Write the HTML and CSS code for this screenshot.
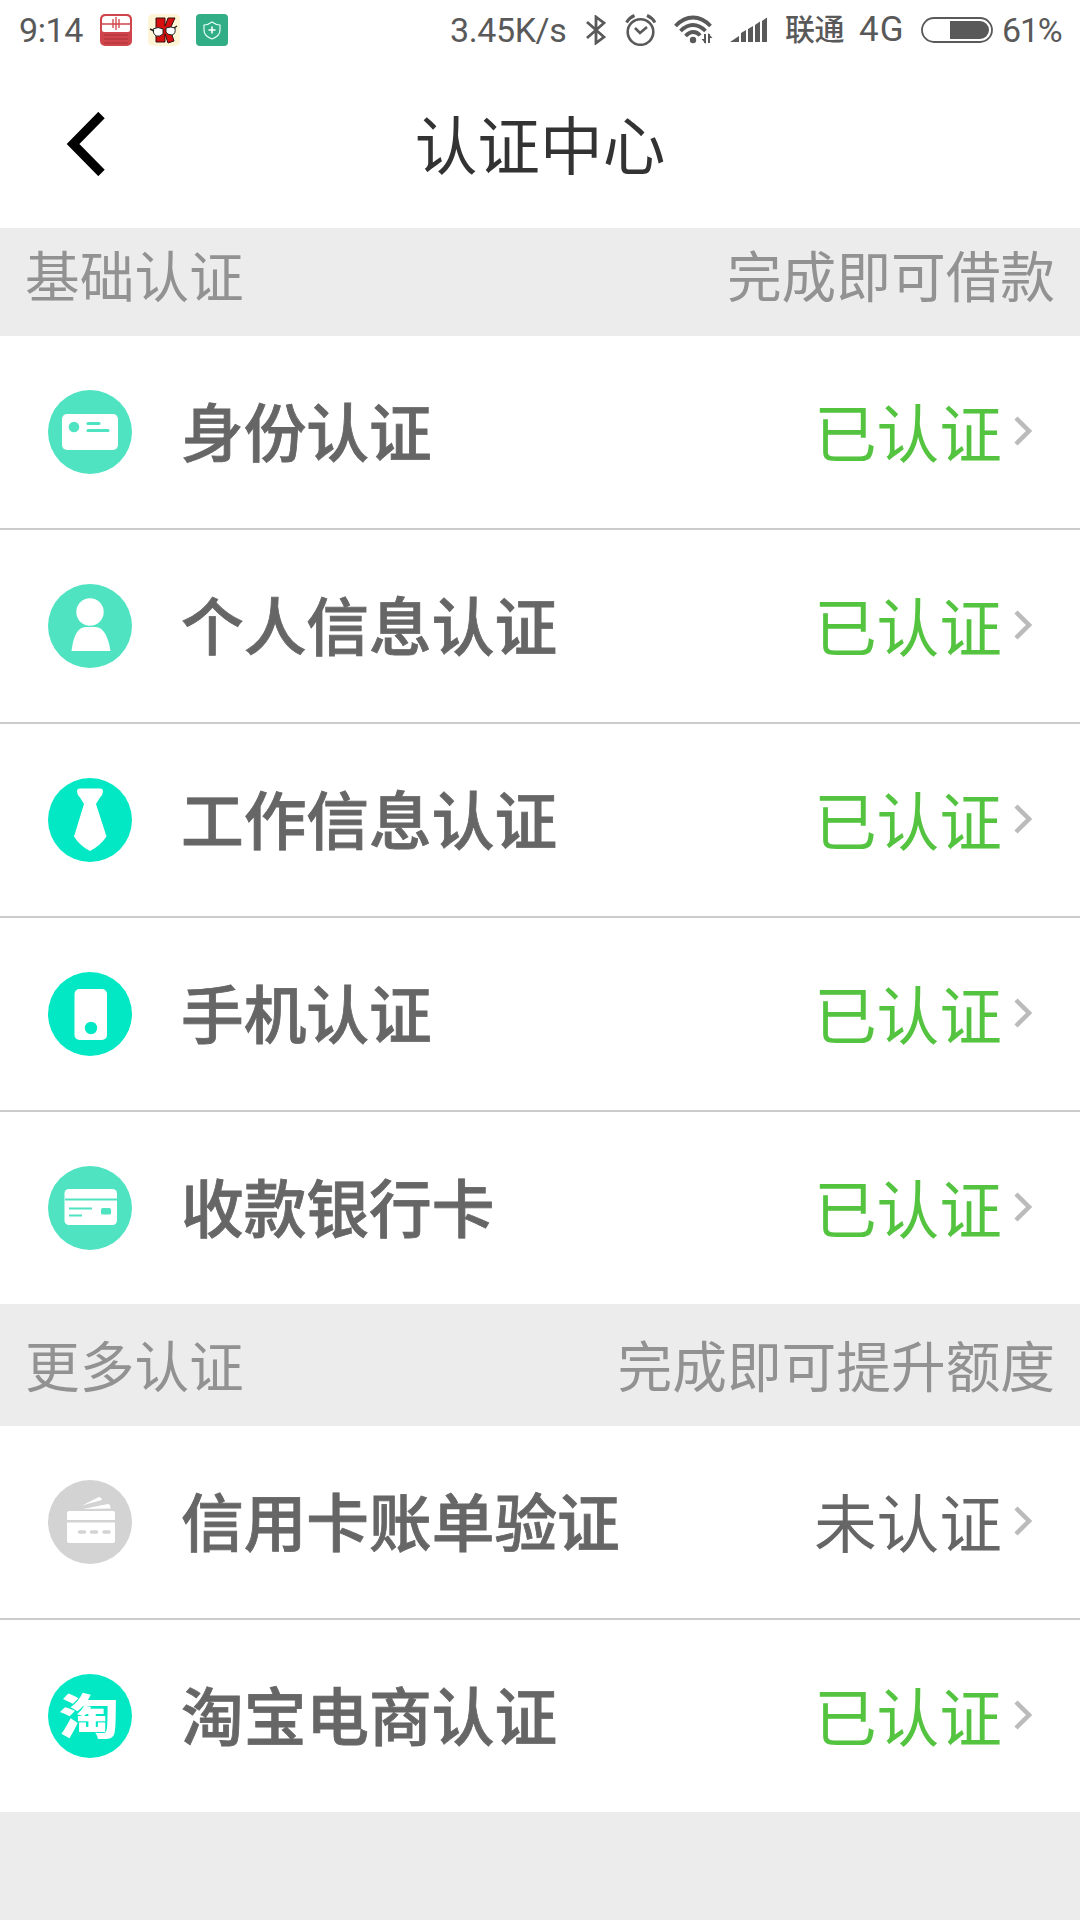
FILE: index.html
```html
<!DOCTYPE html>
<html lang="zh-CN">
<head>
    <meta charset="UTF-8">
    <title>认证中心</title>
    <link rel="stylesheet" href="styles.css">
</head>
<body>

<div class="status-bar">
    <span class="time">9:14</span>
    <svg class="app-icon" viewBox="0 0 32 32">
        <rect width="32" height="32" rx="5" fill="#d0454b"/>
        <path d="M2 16V6q0-4 4-4h20q4 0 4 4v10q0 2-2 2H4q-2 0-2-2z" fill="#fff"/>
        <path d="M2 10h28M13 5v9M16 3v13M19 5v9" stroke="#d0454b" stroke-width="1.300"/>
        <path d="M4 21h24M4 25h24M4 29h24" stroke="#a93239" stroke-width="1"/>
    </svg>
    <svg class="app-icon" viewBox="0 0 32 32">
        <rect width="32" height="32" rx="5" fill="#fdf5d6"/>
        <path d="M8 4h9v8l3-8h7l-5 11 4 12-6 2-3-9v8H8z" fill="#d5100f" stroke="#311" stroke-width="1"/>
        <path d="M5 15q5-3 10 0v5q-3 3-7 2-3-2-3-7zM18 14q5-2 9 0 1 6-3 7-5 0-6-3z" fill="#fff" stroke="#222" stroke-width="1"/>
        <path d="M2 15l4 2M26 14l3-2" stroke="#222" stroke-width="1.500"/>
    </svg>
    <svg class="app-icon" viewBox="0 0 32 32">
        <rect width="32" height="32" rx="4" fill="#31ae85"/>
        <path d="M16 8q4 3 8 3v5q0 6-8 9-8-3-8-9v-5q4 0 8-3z" fill="none" stroke="#e6fff6" stroke-width="1.200"/>
        <path d="M16 12.500v7M12.500 16h7" stroke="#fff" stroke-width="1.600"/>
    </svg>
    <span class="speed">3.45K/s</span>
    <svg class="bluetooth" viewBox="0 0 20 30" width="20" height="30">
        <path d="M1 7l17 15-8 6V2l8 6L1 23" fill="none" stroke="#595959" stroke-width="2.800"/>
    </svg>
    <svg class="alarm" viewBox="0 0 32 32" width="32" height="32">
        <g fill="none" stroke="#595959" stroke-width="2.600">
            <circle cx="15.500" cy="18" r="12.800"/>
            <path d="M10 14l5 5 7-6"/>
            <path d="M1.500 8.500q3-5 8-7M30 8.500q-3-5-8-7" stroke-width="3"/>
        </g>
    </svg>
    <svg class="wifi" viewBox="0 0 40 30" width="40" height="30">
        <g fill="none" stroke="#595959" stroke-width="3.800">
            <path d="M1.500 11q8-8.500 17.500-8.500t17.500 8.500"/>
            <path d="M6.500 16q6-6 12.500-6t12.500 6"/>
            <path d="M11.500 21q4-4 7.500-4 4.500 0 7 3.500"/>
        </g>
        <circle cx="19" cy="25" r="3.200" fill="#595959"/>
        <path d="M31 19v9M35 28v-9" stroke="#595959" stroke-width="2"/>
        <path d="M27.500 24l4.500 5v-5zM38.500 23L34 18v5z" fill="#595959"/>
    </svg>
    <svg class="signal" viewBox="0 0 38 26" width="38" height="26">
        <path d="M0 25l9-6v6zM11 25v-9l5-3v12zM18 25V12l5-3v16zM25 25V8l5-3.500V25zM32 25V4l5-3.500V25z" fill="#595959"/>
    </svg>
    <span class="carrier">联通</span>
    <span class="network">4G</span>
    <svg class="battery" viewBox="0 0 72 26" width="72" height="26">
        <rect x="1" y="1" width="70" height="24" rx="12" fill="none" stroke="#595959" stroke-width="1.800"/>
        <path d="M29 4h30a9 9 0 0 1 0 18H29z" fill="#595959"/>
    </svg>
    <span class="percent">61%</span>
</div>

<div class="header">
    <svg class="back" viewBox="0 0 40 64" width="40" height="64">
        <path d="M35.500 3L7 32l28.500 29" fill="none" stroke="#000" stroke-width="9"/>
    </svg>
    <h1>认证中心</h1>
</div>

<div class="section">
    <span>基础认证</span>
    <span>完成即可借款</span>
</div>
<ul class="list">
    <li>
        <svg class="icon" viewBox="0 0 84 84">
            <circle cx="42" cy="42" r="42" fill="#50e3c2"/>
            <rect x="14" y="24" width="56" height="36" rx="5" fill="#fff"/>
            <circle cx="26" cy="37" r="5.300" fill="#50e3c2"/>
            <path d="M40 33.500h11M40 40.500h20" stroke="#50e3c2" stroke-width="3.200" stroke-linecap="round"/>
        </svg>
        <span class="name">身份认证</span>
        <span class="state done">已认证</span>
        <svg class="arrow" viewBox="0 0 18 30"><path d="M2 2l13 13L2 28"/></svg>
    </li>
    <li>
        <svg class="icon" viewBox="0 0 84 84">
            <circle cx="42" cy="42" r="42" fill="#50e3c2"/>
            <circle cx="42" cy="28" r="13.700" fill="#fff"/>
            <path d="M23.500 67q3-24 14-24h10q11 0 15 24z" fill="#fff"/>
        </svg>
        <span class="name">个人信息认证</span>
        <span class="state done">已认证</span>
        <svg class="arrow" viewBox="0 0 18 30"><path d="M2 2l13 13L2 28"/></svg>
    </li>
    <li>
        <svg class="icon" viewBox="0 0 84 84">
            <circle cx="42" cy="42" r="42" fill="#02e8c4"/>
            <path d="M32 10.500h20q3 0 3 3 0 3-3 6l-4 6.500 10.500 32.500Q52 68 42 73 32 68 26 58.500L36 26l-4-6.500q-3-3-3-6 0-3 3-3z" fill="#fff"/>
        </svg>
        <span class="name">工作信息认证</span>
        <span class="state done">已认证</span>
        <svg class="arrow" viewBox="0 0 18 30"><path d="M2 2l13 13L2 28"/></svg>
    </li>
    <li>
        <svg class="icon" viewBox="0 0 84 84">
            <circle cx="42" cy="42" r="42" fill="#02e8c4"/>
            <rect x="26.500" y="17" width="32.500" height="51" rx="5" fill="#fff"/>
            <circle cx="43" cy="56" r="6.200" fill="#02e8c4"/>
        </svg>
        <span class="name">手机认证</span>
        <span class="state done">已认证</span>
        <svg class="arrow" viewBox="0 0 18 30"><path d="M2 2l13 13L2 28"/></svg>
    </li>
    <li>
        <svg class="icon" viewBox="0 0 84 84">
            <circle cx="42" cy="42" r="42" fill="#50e3c2"/>
            <rect x="16.500" y="23" width="52.500" height="36" rx="4.500" fill="#fff"/>
            <path d="M17 33.500h52M21 42.500h23M21 49.500h13" stroke="#50e3c2" stroke-width="2"/>
            <rect x="53" y="42" width="10" height="6.500" rx="1.500" fill="#50e3c2"/>
        </svg>
        <span class="name">收款银行卡</span>
        <span class="state done">已认证</span>
        <svg class="arrow" viewBox="0 0 18 30"><path d="M2 2l13 13L2 28"/></svg>
    </li>
</ul>

<div class="section more">
    <span>更多认证</span>
    <span>完成即可提升额度</span>
</div>
<ul class="list">
    <li>
        <svg class="icon" viewBox="0 0 84 84">
            <circle cx="42" cy="42" r="42" fill="#d3d3d3"/>
            <path d="M34 25.500L51 17q2-.5 3 3zM35 29l25-5q2.500 0 2.500 4.500z" fill="#fff"/>
            <path d="M19 40v-7q0-2 2-2h44q2 0 2 2v7zM19 42.500h48V61q0 2-2 2H21q-2 0-2-2z" fill="#fff"/>
            <path d="M31.500 52h5M43.500 52h5M56 52h5" stroke="#d3d3d3" stroke-width="3.500" stroke-linecap="round"/>
        </svg>
        <span class="name">信用卡账单验证</span>
        <span class="state">未认证</span>
        <svg class="arrow" viewBox="0 0 18 30"><path d="M2 2l13 13L2 28"/></svg>
    </li>
    <li>
        <svg class="icon" viewBox="0 0 84 84">
            <circle cx="42" cy="42" r="42" fill="#02e8c4"/>
            <text class="tao" transform="translate(41 60) scale(1.2 .95)" text-anchor="middle">淘</text>
        </svg>
        <span class="name">淘宝电商认证</span>
        <span class="state done">已认证</span>
        <svg class="arrow" viewBox="0 0 18 30"><path d="M2 2l13 13L2 28"/></svg>
    </li>
</ul>

</body>
</html>
```
FILE: styles.css
```css
* {
    margin: 0;
    padding: 0;
    list-style: none;
    box-sizing: border-box;
}

body {
    min-height: 1920px;
    background: #ececec;
    font-family: "Noto Sans CJK SC", sans-serif;
}

svg {
    display: block;
    flex-shrink: 0;
}

.status-bar {
    display: flex;
    align-items: center;
    height: 60px;
    padding-left: 19px;
    background: #fff;
    color: #595959;
    font: 34px/60px Roboto, "Noto Sans CJK SC", sans-serif;
    letter-spacing: -0.4px;
    white-space: nowrap;
}

.status-bar span {
    flex-shrink: 0;
}

.time {
    width: 81px;
}

.app-icon {
    width: 32px;
    height: 32px;
    margin-right: 16px;
}

.speed {
    width: 120px;
    margin-left: 206px;
}

.bluetooth {
    margin-left: 16px;
}

.alarm {
    margin: 0 17px 0 19px;
}

.signal {
    margin: 0 17px 0 16px;
}

.carrier {
    width: 74px;
    font-size: 30px;
    font-weight: 500;
}

.network {
    width: 62px;
    font-size: 35px;
    letter-spacing: 1px;
}

.percent {
    margin-left: 9px;
    letter-spacing: -1.2px;
}

.header {
    display: grid;
    grid-template-columns: 120px 1fr 120px;
    align-items: center;
    height: 168px;
    background: #fff;
}

.back {
    margin-left: 66px;
}

.header h1 {
    padding-bottom: 5px;
    color: #333;
    font-size: 62.700px;
    font-weight: 400;
    line-height: 163px;
    text-align: center;
}

.section {
    display: flex;
    justify-content: space-between;
    height: 108px;
    padding: 0 25px;
    color: #929292;
    font-size: 54.700px;
    line-height: 92px;
}

.section.more {
    height: 122px;
    line-height: 120px;
}

.list {
    background: #fff;
}

.list li {
    display: flex;
    align-items: center;
    height: 194px;
    padding: 0 48px;
    border-bottom: 2px solid #ccc;
}

.list li:last-child {
    height: 192px;
    border-bottom: none;
}

.icon {
    width: 84px;
    height: 84px;
}

.tao {
    fill: #fff;
    font-size: 50px;
    font-weight: 900;
}

.name {
    flex: 1;
    margin-left: 49px;
    padding-bottom: 6px;
    color: #666;
    font-size: 62.700px;
    font-weight: 500;
    line-height: 186px;
    -webkit-text-stroke: 0.8px #666;
}

.state {
    padding-bottom: 5px;
    color: #666;
    font-size: 62.700px;
    line-height: 187px;
}

.state.done {
    color: #54c440;
}

.arrow {
    width: 18px;
    height: 30px;
    margin: 0 0 2px 12px;
    fill: none;
    stroke: #bbb;
    stroke-width: 4.500;
}
```
